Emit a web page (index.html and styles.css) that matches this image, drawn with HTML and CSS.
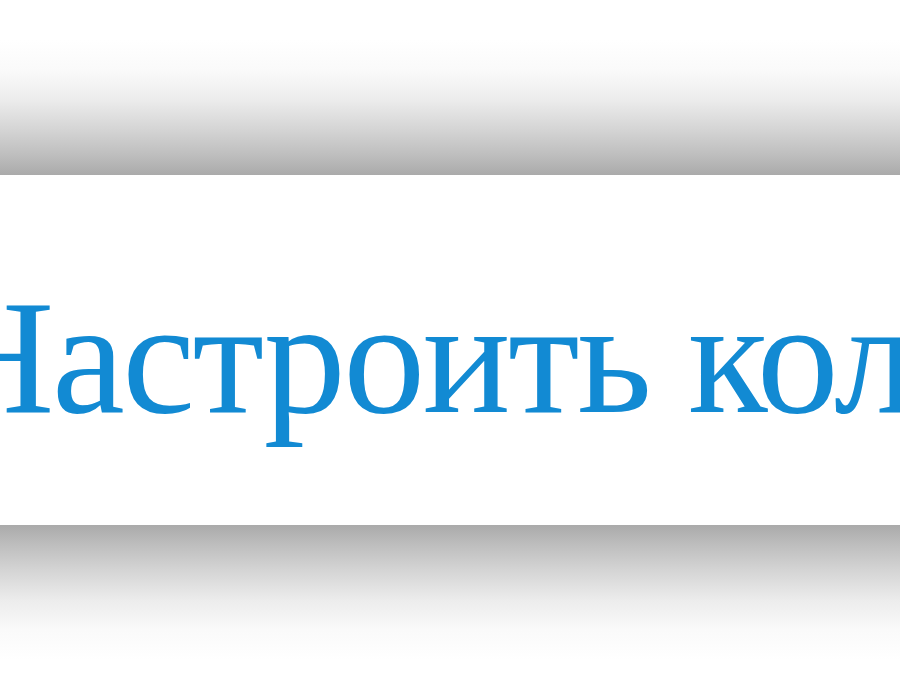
FILE: index.html
```html
<!DOCTYPE html>
<html lang="ru">
<head>
<meta charset="utf-8">
<title>Настроить колонки</title>
<link rel="stylesheet" href="styles.css">
</head>
<body>
<div class="tab">
  <div class="edge edge-top"></div>
  <div class="label">Настроить колонки</div>
  <div class="edge edge-bottom"></div>
</div>
</body>
</html>
```
FILE: styles.css
```css
html, body {
  margin: 0;
  padding: 0;
  background: #ffffff;
  overflow: hidden;
}
.tab {
  width: 900px;
  height: 700px;
  display: flex;
  flex-direction: column;
}
.edge {
  height: 175px;
  flex: none;
}
.edge-top {
  background: linear-gradient(to bottom, #ffffff 0px, #ffffff 40px, #fafafa 70px, #ececec 100px, #d4d4d4 130px, #bebebe 155px, #aaaaaa 175px);
}
.edge-bottom {
  background: linear-gradient(to top, #ffffff 0px, #ffffff 40px, #fafafa 70px, #ececec 100px, #d4d4d4 130px, #bebebe 155px, #aaaaaa 175px);
}
.label {
  height: 350px;
  flex: none;
  box-sizing: border-box;
  padding-top: 100px;
  font-family: "Liberation Serif", "Times New Roman", serif;
  font-size: 164px;
  line-height: 1;
  letter-spacing: -2.5px;
  color: #128ad3;
  white-space: nowrap;
  overflow: hidden;
  text-indent: -64px;
}
```
